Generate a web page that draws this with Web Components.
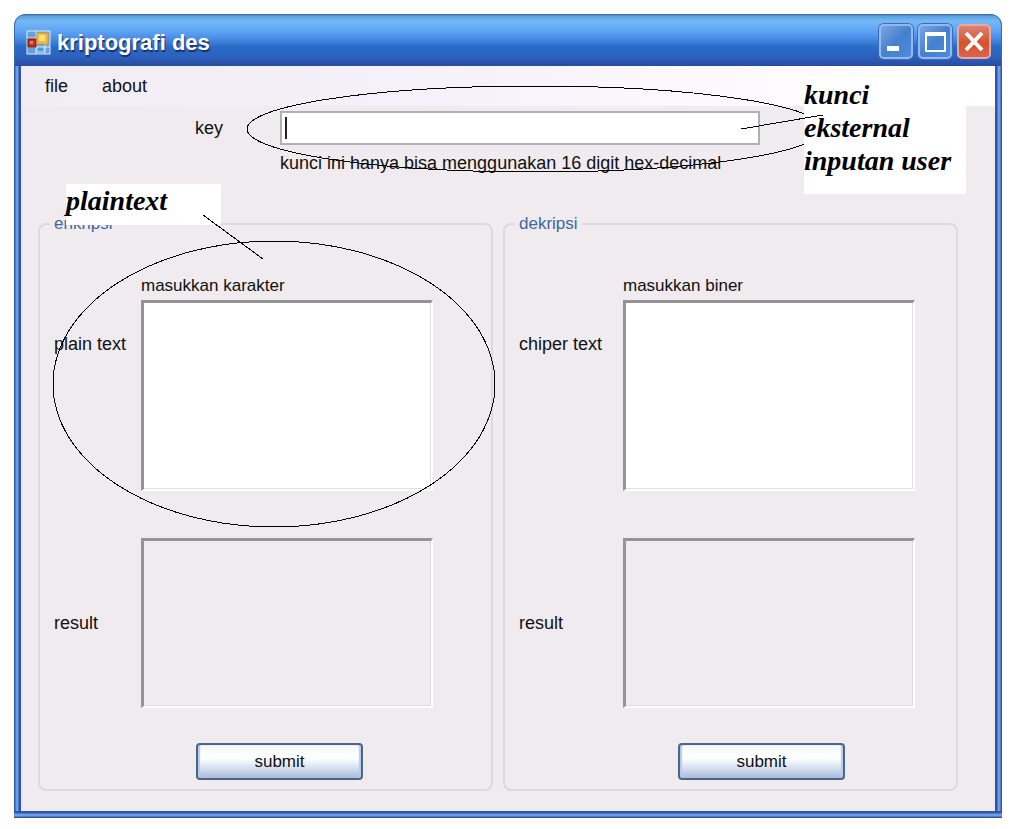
<!DOCTYPE html>
<html lang="id">
<head>
<meta charset="utf-8">
<title>kriptografi des</title>
<style>
  body {
    margin: 0;
    padding: 14px 8px 11px 14px;
    background: #fff;
    color: #111;
    font: 18px/20px "Liberation Sans", Arial, sans-serif;
  }
</style>
</head>
<body>
<xp-window>
  <span slot="title">kriptografi des</span>
  <xp-menu slot="menu"></xp-menu>
  <key-field>
    <callout-note kind="key">kunci<br>eksternal<br>inputan user</callout-note>
  </key-field>
  <group-row>
    <cipher-group legend="enkripsi" caption="masukkan karakter" source="plain text">
      <callout-note kind="plain">plaintext</callout-note>
    </cipher-group>
    <cipher-group class="wide" legend="dekripsi" caption="masukkan biner" source="chiper text"></cipher-group>
  </group-row>
</xp-window>

<script>
const define = (name, html, setup) => customElements.define(name, class extends HTMLElement {
  connectedCallback() {
    if (this.shadowRoot) return;
    const root = this.attachShadow({ mode: 'open' });
    root.innerHTML = html;
    if (setup) setup(this, root);
  }
});

define('xp-window', `
<style>
  :host { display: block; }
  .frame {
    border-radius: 12px 12px 0 0;
    background: linear-gradient(to right, #3157a4 0 1px, #6f9ce6 2px 4px, #2f54a8 5px 7px, transparent 7px calc(100% - 7px), #2f54a8 calc(100% - 7px) calc(100% - 5px), #6f9ce6 calc(100% - 4px) calc(100% - 2px), #3157a4 calc(100% - 1px)), #5f8cda;
  }
  header {
    display: flex; align-items: center; gap: 6px; box-sizing: border-box;
    height: 52px; padding: 0 11px 2px 12px;
    border-radius: 12px 12px 0 0;
    background: linear-gradient(#2f5da8 0, #5b9fe0 2px, #74b9f3 7px, #62a6f6 16px, #4a8ee6 24px, #2a6bc8 33px, #2c62c0 42px, #2a4da2 51px);
    box-shadow: inset 1px 0 #3c68b0, inset -1px 0 #3c68b0;
  }
  h1 {
    flex: 1; margin: 0; padding-top: 8px; color: #fff; font-size: 22px; line-height: 26px; font-weight: bold;
    text-shadow: 1px 2px 1px #16306e;
  }
  .logo { margin-top: 6px; }
  .controls { display: flex; gap: 5px; padding-top: 4px; }
  button {
    box-sizing: border-box; width: 34px; height: 35px; padding: 0;
    border: 2px solid #93b9ee; border-radius: 5px;
    background: linear-gradient(135deg, #78a6e4, #4680cc 50%, #4f8ae0);
    box-shadow: 0 0 0 1px #3d6cb8;
  }
  button.close { border-color: #eaa9a0; background: linear-gradient(#dc8276, #d6522c 55%, #da6450); box-shadow: none; }
  svg { display: block; }
  main {
    margin: 0 7px; padding-bottom: 20px;
    background: #efebee;
  }
  footer { height: 7px; background: linear-gradient(#2f54a8 0 2px, #6f9ce6 3px 5px, #3157a4 6px); }
</style>
<div class="frame">
  <header>
    <svg class="logo" width="25" height="25" viewBox="0 0 25 25" aria-hidden="true">
      <rect x="1" y="1" width="23" height="23" fill="#6aa0d8" stroke="#dce9f8"/>
      <path d="M1 8H11M1 17H24M10 1V24M19 14V24" stroke="#dce9f8"/>
      <rect x="2" y="9" width="8" height="8" fill="#c52d1c" stroke="#7d1b14"/>
      <rect x="4" y="11" width="3" height="3" fill="#ef7a64"/>
      <rect x="11" y="3" width="11" height="11" fill="#f2bd3d" stroke="#d99a2b"/>
      <rect x="13" y="5" width="6" height="6" fill="#fbe07c"/>
      <rect x="11" y="17" width="7" height="5" fill="#4d9ae0" stroke="#bfe0fa"/>
    </svg>
    <h1><slot name="title"></slot></h1>
    <div class="controls">
      <button type="button" aria-label="Minimize"><svg width="30" height="31"><rect x="6" y="20" width="12" height="5" fill="#fff"/></svg></button>
      <button type="button" aria-label="Maximize"><svg width="30" height="31"><path d="M6 7H25V25H6Z" fill="none" stroke="#fff" stroke-width="2"/><path d="M5 8H26" stroke="#fff" stroke-width="4"/></svg></button>
      <button type="button" class="close" aria-label="Close"><svg width="30" height="31"><path d="M7 7L23 24M23 7L7 24" stroke="#fff" stroke-width="4"/></svg></button>
    </div>
  </header>
  <main><slot name="menu"></slot><slot></slot></main>
  <footer></footer>
</div>`);

define('xp-menu', `
<style>
  :host { display: block; }
  nav {
    display: flex; gap: 34px; align-items: center; height: 40px; padding: 0 24px;
    background: linear-gradient(to right, #f1edf3, #f5f0f9 40%, #fdfafe 75%, #fff);
  }
  a { color: #111; text-decoration: none; }
</style>
<nav><a href="#file">file</a><a href="#about">about</a></nav>`);

define('key-field', `
<style>
  :host { display: block; position: relative; z-index: 1; padding: 5px 235px 41px 174px; }
  .grid { display: grid; grid-template-columns: 85px 1fr; row-gap: 8px; align-items: center; }
  .box { position: relative; display: flex; }
  .box::before { content: ""; position: absolute; left: 5px; top: 6px; width: 2px; height: 22px; background: #222; }
  input {
    flex: 1; min-width: 0; box-sizing: border-box; height: 34px; padding: 0 8px;
    border: 2px solid #adb1b3; border-radius: 0; background: #fff; font: inherit; outline: none;
  }
  p { grid-column: 2; margin: 0; white-space: nowrap; }
</style>
<div class="grid">
  <label for="key">key</label>
  <div class="box"><input id="key" type="text" aria-describedby="hint"></div>
  <p id="hint">kunci ini hanya bisa menggunakan 16 digit hex-decimal</p>
</div>
<slot></slot>`);

define('group-row', `
<style>
  :host { display: grid; grid-template-columns: 1fr 1fr; gap: 10px; padding: 0 37px 0 17px; }
</style>
<slot></slot>`);

define('cipher-group', `
<style>
  :host { display: block; position: relative; --label: 87px; --end: 58px; }
  :host(.wide) { --label: 104px; --end: 41px; }
  fieldset {
    min-width: 0; margin: 0; padding: 42px var(--end) 9px 14px;
    border: 2px solid #dddadf; border-radius: 8px;
  }
  legend { margin-left: -4px; padding: 0 4px; color: #3f689f; font-size: 17px; }
  .grid { display: grid; grid-template-columns: var(--label) 1fr; }
  .caption { grid-column: 2; margin-bottom: 4px; font-size: 17px; }
  .source { padding-top: 34px; }
  .result { align-self: center; }
  textarea {
    display: block; box-sizing: border-box; width: 100%; height: 191px; margin: 0 0 47px; padding: 4px;
    border: solid; border-width: 3px 2px 2px 3px; border-color: #969395 #fff #fff #969395;
    background: #fff; font: inherit; resize: none; outline: none;
  }
  textarea[readonly] {
    height: 170px; margin: 0; background: #efebee; box-shadow: inset -1px -1px #dedadd;
  }
  textarea:not([readonly]) { box-shadow: inset -1px -1px #e2dfe2; }
  button {
    grid-column: 2; justify-self: start; box-sizing: border-box; width: 167px; height: 37px;
    margin: 35px 0 0 55px; padding: 0;
    border: 2px solid #4d6587; border-radius: 4px;
    background: linear-gradient(#f4f9fd, #fff 40%, #dce5f3 65%, #a9bbdc);
    box-shadow: inset 2px 0 1px #b8cbe6, inset -2px 0 1px #b8cbe6;
    color: #111; font: inherit; font-size: 17px;
  }
</style>
<fieldset>
  <legend></legend>
  <div class="grid">
    <label class="caption" for="source"></label>
    <label class="source" for="source"></label>
    <textarea id="source"></textarea>
    <label class="result" for="result">result</label>
    <textarea id="result" readonly></textarea>
    <button type="button">submit</button>
  </div>
</fieldset>
<slot></slot>`, (host, root) => {
  root.querySelector('legend').textContent = host.getAttribute('legend');
  root.querySelector('.caption').textContent = host.getAttribute('caption');
  root.querySelector('.source').textContent = host.getAttribute('source');
});

define('callout-note', `
<style>
  :host {
    position: absolute; pointer-events: none; color: #000;
    font: italic bold 28px/33px "Liberation Serif", "Times New Roman", serif;
  }
  :host([kind=key]) { right: 29px; top: -30px; width: 162px; height: 118px; }
  :host([kind=plain]) { left: 28px; top: -30px; width: 155px; height: 41px; }
  .text { position: relative; height: 100%; background: #fff; white-space: nowrap; }
  :host([kind=key]) .text { box-sizing: border-box; padding-top: 2px; }
  svg { position: absolute; left: 0; top: 0; overflow: visible; fill: none; stroke: #000; shape-rendering: crispEdges; }
  .key, .plain { display: none; }
  :host([kind=key]) .key, :host([kind=plain]) .plain { display: block; }
</style>
<svg width="1" height="1" aria-hidden="true">
  <ellipse class="key" cx="-269" cy="53" rx="288" ry="43"/>
</svg>
<div class="text"><slot></slot></div>
<svg width="1" height="1" aria-hidden="true">
  <path class="key" d="M-63 53L19 39"/>
  <ellipse class="plain" cx="208" cy="200" rx="221" ry="143"/>
  <path class="plain" d="M137 31L197 75"/>
</svg>`);
</script>
</body>
</html>
